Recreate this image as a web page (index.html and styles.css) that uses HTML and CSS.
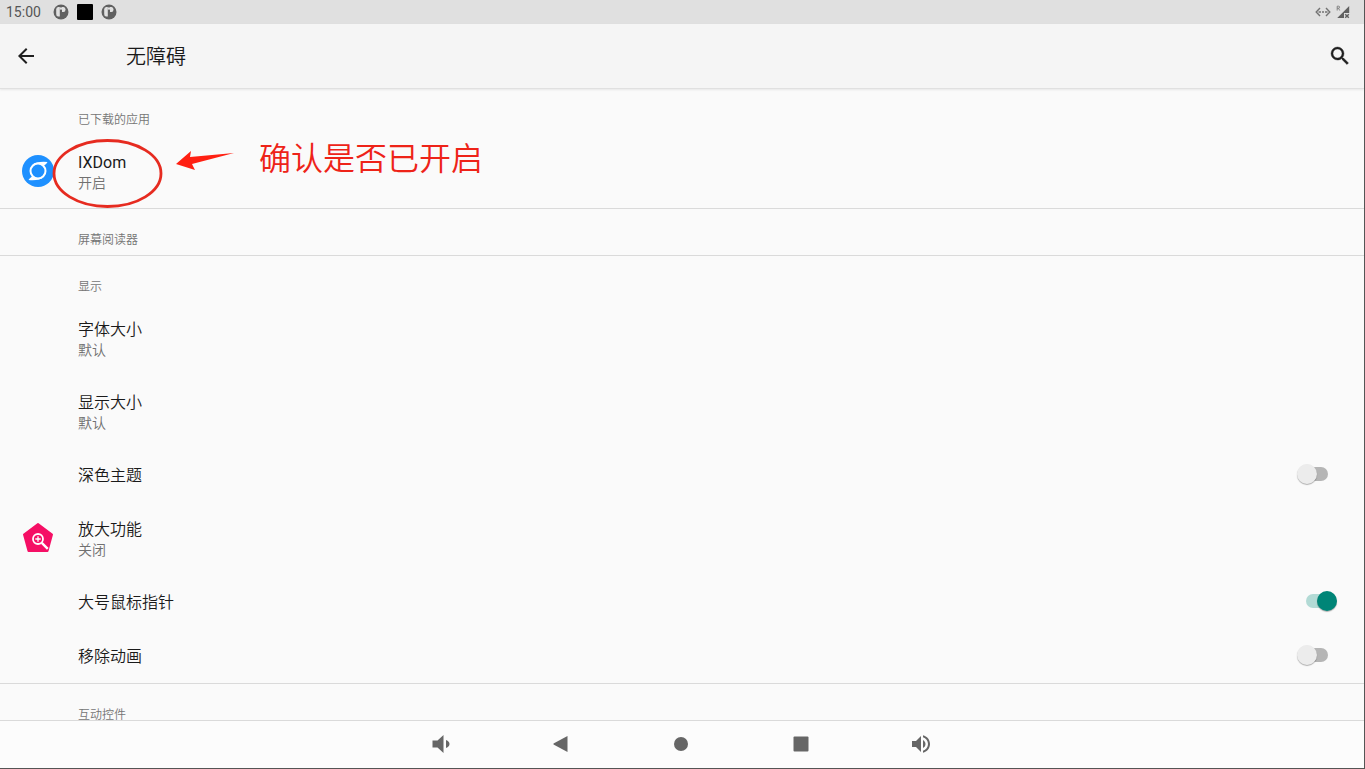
FILE: index.html
```html
<!DOCTYPE html>
<html lang="zh-CN">
<head>
    <meta charset="UTF-8">
    <meta name="viewport" content="width=device-width, initial-scale=1.0">
    <title>无障碍</title>
    <link rel="stylesheet" href="styles.css">
</head>
<body>
    <div class="status-bar">
        <span class="time">15:00</span>
        <svg class="status-icon" viewBox="0 0 16 16" width="16" height="16">
            <circle cx="8" cy="8" r="7.5" fill="#606060"/>
            <path d="M3.2 5.5Q3.2 3 5.2 3h1.6v9.5H5.2Q3.2 12.5 3.2 10z" fill="#e0e0e0"/>
            <path d="M9 3h1.5q2 0 2 2.5t-2 2.500H9z" fill="#e0e0e0"/>
            <circle cx="8" cy="4.5" r="1.2" fill="#e0e0e0"/>
        </svg>
        <span class="status-square"></span>
        <svg class="status-icon" viewBox="0 0 16 16" width="16" height="16">
            <circle cx="8" cy="8" r="7.5" fill="#606060"/>
            <path d="M3.2 5.5Q3.2 3 5.2 3h1.6v9.5H5.2Q3.2 12.5 3.2 10z" fill="#e0e0e0"/>
            <path d="M9 3h1.5q2 0 2 2.5t-2 2.500H9z" fill="#e0e0e0"/>
            <circle cx="8" cy="4.5" r="1.2" fill="#e0e0e0"/>
        </svg>
        <div class="status-right">
            <svg viewBox="0 0 16 12" width="16" height="12" fill="none" stroke="#737373" stroke-width="1.4">
                <path d="M5 2L1.2 6 5 10M11 2l3.800 4L11 10"/>
                <path d="M3.500 6h2.500M7 6h2M10 6h2.500"/>
            </svg>
            <svg viewBox="0 0 14 14" width="14" height="14">
                <path d="M13.2 1v7H8v5H1.2z" fill="#606060"/>
                <path d="M1.2 5.5V1.2h1.4q1 0 1 1t-1 1H1.2m1.3 0l1.2 2.3" fill="none" stroke="#707070" stroke-width="0.8"/>
                <path d="M9.2 9.3l3.6 3.4m0-3.4l-3.6 3.4" stroke="#606060" stroke-width="1.5"/>
            </svg>
        </div>
    </div>

    <header class="app-bar">
        <button class="icon-btn" aria-label="返回">
            <svg viewBox="0 0 24 24" width="24" height="24"><path d="M20 11H7.83l5.59-5.59L12 4l-8 8 8 8 1.41-1.41L7.83 13H20v-2z" fill="#1f1f1f"/></svg>
        </button>
        <h1>无障碍</h1>
        <button class="icon-btn" aria-label="搜索">
            <svg viewBox="0 0 24 24" width="24" height="24"><path d="M15.5 14h-.79l-.28-.27A6.471 6.471 0 0 0 16 9.5 6.5 6.5 0 1 0 9.5 16c1.61 0 3.09-.59 4.23-1.57l.27.28v.79l5 4.99L20.49 19l-4.99-5zm-6 0C7.01 14 5 11.99 5 9.5S7.01 5 9.5 5 14 7.01 14 9.5 11.99 14 9.5 14z" fill="#1f1f1f" stroke="#1f1f1f" stroke-width="0.4"/></svg>
        </button>
    </header>

    <main class="settings">
        <section>
            <h2>已下载的应用</h2>
            <div class="highlighted">
                <button class="item">
                    <span class="item-icon">
                        <svg viewBox="0 0 32 32" width="32" height="32">
                            <circle cx="16" cy="16" r="16" fill="#1e90ff"/>
                            <circle cx="16" cy="16" r="7.5" fill="none" stroke="#fff" stroke-width="2"/>
                            <path d="M10 10Q15 6 25.5 7Q24.5 9 22 10.5Q17 6.5 10 10zM22 22Q17 26 6.5 25Q7.5 23 10 21.5Q15 25.5 22 22z" fill="#fff"/>
                        </svg>
                    </span>
                    <span class="item-text">
                        <span class="item-title app-name">IXDom</span>
                        <span class="item-summary">开启</span>
                    </span>
                </button>
                <div class="note">
                    <svg viewBox="0 0 182 70" width="182" height="70">
                        <ellipse cx="55.5" cy="34.5" rx="53.5" ry="33" fill="none" stroke="#e62b20" stroke-width="2.8"/>
                        <path d="M124 25L139 12l-1 6L182 14l-42 11 3 6z" fill="#ff2012"/>
                    </svg>
                    <span class="note-text">确认是否已开启</span>
                </div>
            </div>
        </section>

        <section>
            <h2>屏幕阅读器</h2>
        </section>

        <section>
            <h2>显示</h2>
            <button class="item">
                <span class="item-icon"></span>
                <span class="item-text">
                    <span class="item-title">字体大小</span>
                    <span class="item-summary">默认</span>
                </span>
            </button>
            <button class="item">
                <span class="item-icon"></span>
                <span class="item-text">
                    <span class="item-title">显示大小</span>
                    <span class="item-summary">默认</span>
                </span>
            </button>
            <div class="item">
                <span class="item-icon"></span>
                <label class="item-title" for="dark">深色主题</label>
                <input type="checkbox" class="switch" id="dark">
            </div>
            <button class="item">
                <span class="item-icon">
                    <svg viewBox="0 0 32 32" width="32" height="32">
                        <path d="M16 2L30 12.5 25.5 29h-19L2 12.5z" fill="#f50f65" stroke="#f50f65" stroke-width="2" stroke-linejoin="round"/>
                        <circle cx="16" cy="17" r="5" fill="none" stroke="#fff" stroke-width="1.8"/>
                        <path d="M19.8 20.8l6 6" stroke="#fff" stroke-width="2.4"/>
                        <path d="M16 14.3v5.4M13.3 17h5.4" stroke="#fff" stroke-width="1.3"/>
                    </svg>
                </span>
                <span class="item-text">
                    <span class="item-title">放大功能</span>
                    <span class="item-summary">关闭</span>
                </span>
            </button>
            <div class="item">
                <span class="item-icon"></span>
                <label class="item-title" for="pointer">大号鼠标指针</label>
                <input type="checkbox" class="switch" id="pointer" checked>
            </div>
            <div class="item">
                <span class="item-icon"></span>
                <label class="item-title" for="animation">移除动画</label>
                <input type="checkbox" class="switch" id="animation">
            </div>
        </section>

        <section>
            <h2>互动控件</h2>
        </section>
    </main>

    <nav class="nav-bar">
        <button class="nav-btn" aria-label="音量减">
            <svg viewBox="0 0 24 24" width="24" height="24"><path d="M3.5 8.500v7h5l6 5.500V3L8.500 8.500zM17 8v8q3.500-1.300 3.500-4T17 8z"/></svg>
        </button>
        <button class="nav-btn" aria-label="返回">
            <svg viewBox="0 0 24 24" width="24" height="24"><path d="M18.5 4v16L4.5 12.5v-1z"/></svg>
        </button>
        <button class="nav-btn" aria-label="主屏幕">
            <svg viewBox="0 0 24 24" width="24" height="24"><circle cx="12" cy="12" r="7"/></svg>
        </button>
        <button class="nav-btn" aria-label="概览">
            <svg viewBox="0 0 24 24" width="24" height="24"><rect x="4.5" y="4.5" width="15" height="15" rx="1"/></svg>
        </button>
        <button class="nav-btn" aria-label="音量加">
            <svg viewBox="0 0 24 24" width="24" height="24"><path d="M3 9v6h4l5 5V4L7 9H3zm13.5 3c0-1.77-1.02-3.29-2.5-4.03v8.05c1.48-.73 2.5-2.25 2.5-4.02zM14 3.23v2.06c2.89.86 5 3.54 5 6.71s-2.11 5.85-5 6.71v2.06c4.01-.91 7-4.49 7-8.77s-2.99-7.86-7-8.77z"/></svg>
        </button>
    </nav>
</body>
</html>
```
FILE: styles.css
```css
* {
    box-sizing: border-box;
}
body {
    margin: 0;
    height: 100vh;
    display: flex;
    flex-direction: column;
    border-right: 1px solid #555;
    border-bottom: 1px solid #555;
    background-color: #fafafa;
    color: #1a1a1a;
    font-family: Roboto, "Noto Sans CJK SC", sans-serif;
    font-weight: 350;
    overflow: hidden;
}
button {
    padding: 0;
    border: none;
    background: none;
    color: inherit;
    font-family: inherit;
    font-weight: inherit;
    cursor: pointer;
}
svg {
    display: block;
}
.status-bar {
    flex: none;
    height: 24px;
    padding: 0 14px 0 6px;
    display: flex;
    align-items: center;
    gap: 8px;
    background-color: #e0e0e0;
}
.time {
    width: 36px;
    margin-right: 3px;
    font-size: 14px;
    font-weight: 400;
    color: #555;
}
.status-square {
    width: 16px;
    height: 16px;
    border-radius: 1px;
    background-color: #000;
}
.status-right {
    margin-left: auto;
    display: flex;
    align-items: center;
    gap: 5px;
}
.app-bar {
    flex: none;
    height: 65px;
    padding: 0 12px 0 14px;
    display: flex;
    align-items: center;
    background-color: #f5f5f5;
    border-bottom: 1px solid #e0e0e0;
    box-shadow: 0 1px 2px rgba(0, 0, 0, 0.08);
    z-index: 1;
}
.app-bar h1 {
    flex: 1;
    margin: 0 0 0 88px;
    padding-top: 2px;
    font-size: 20px;
    font-weight: 350;
    line-height: 28px;
}
.settings {
    flex: 1;
    min-height: 0;
    overflow-y: auto;
    scrollbar-width: none;
}
section {
    border-bottom: 1px solid #dadada;
}
section:last-child {
    border-bottom: none;
}
h2 {
    margin: 0;
    padding: 22px 0 6px 78px;
    font-size: 12px;
    font-weight: 350;
    line-height: 18px;
    color: #757575;
}
.item {
    width: 100%;
    min-height: 54px;
    padding: 0 27px 2px 22px;
    display: flex;
    align-items: center;
    text-align: left;
}
button.item {
    min-height: 73px;
}
.item-icon {
    flex: none;
    width: 32px;
    margin-right: 24px;
}
.item-text {
    display: flex;
    flex-direction: column;
}
.item-title {
    padding-top: 4px;
    font-size: 16px;
    line-height: 20px;
}
.app-name {
    font-weight: 400;
}
.item-summary {
    font-size: 14px;
    line-height: 20px;
    color: #707070;
}
.highlighted {
    position: relative;
}
.note {
    position: absolute;
    left: 52px;
    top: 4px;
    display: flex;
    gap: 25px;
    pointer-events: none;
}
.note-text {
    font-size: 32px;
    line-height: 40px;
    color: #ee2318;
}
.switch {
    appearance: none;
    position: relative;
    width: 40px;
    height: 20px;
    margin: 0 0 0 auto;
    cursor: pointer;
}
.switch::before {
    content: "";
    position: absolute;
    left: 9px;
    top: 3px;
    width: 22px;
    height: 14px;
    border-radius: 7px;
    background-color: #b5b5b5;
}
.switch::after {
    content: "";
    position: absolute;
    left: 0;
    top: 0;
    width: 20px;
    height: 20px;
    border-radius: 50%;
    background-color: #ececec;
    box-shadow: 0 1px 1px rgba(0, 0, 0, 0.3);
}
.switch:checked::before {
    background-color: #b2dad5;
}
.switch:checked::after {
    left: 20px;
    background-color: #008577;
}
.nav-bar {
    flex: none;
    height: 48px;
    padding: 0 2px 2px 0;
    display: flex;
    justify-content: center;
    align-items: center;
    border-top: 1px solid #dadada;
    background-color: #fcfcfc;
}
.nav-btn {
    width: 120px;
    height: 44px;
    display: flex;
    justify-content: center;
    align-items: center;
    fill: #666;
}
```
